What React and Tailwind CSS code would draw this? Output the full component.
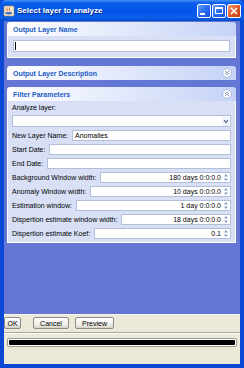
import React from "react";

const font = { fontFamily: '"Liberation Sans", Arial, sans-serif' };

function CollapseIcon({ up }) {
  return (
    <svg width="10" height="10" viewBox="0 0 10 10" className="block">
      <circle cx="5" cy="5" r="4.3" fill="#ffffff" stroke="#a6b4d8" strokeWidth="0.8" />
      {up ? (
        <g fill="none" stroke="#7d8fb8" strokeWidth="0.9">
          <path d="M3 5 L5 3.2 L7 5" />
          <path d="M3 7 L5 5.2 L7 7" />
        </g>
      ) : (
        <g fill="none" stroke="#7d8fb8" strokeWidth="0.9">
          <path d="M3 3 L5 4.8 L7 3" />
          <path d="M3 5 L5 6.8 L7 5" />
        </g>
      )}
    </svg>
  );
}

function PanelHeader({ title, icon }) {
  return (
    <div className="h-[14px] flex items-center justify-between pl-[6px] pr-[4px] rounded-t-[3px] bg-[linear-gradient(to_right,#ffffff,#c6d3f7)]">
      <span className="text-[7px] font-bold text-[#215dc6] leading-none">{title}</span>
      {icon}
    </div>
  );
}

function Spinner() {
  return (
    <svg width="6" height="9" viewBox="0 0 6 9" className="block">
      <path d="M1 3.5 L3 1 L5 3.5 Z" fill="#8a9bc4" />
      <path d="M1 5.5 L3 8 L5 5.5 Z" fill="#8a9bc4" />
    </svg>
  );
}

function TextRow({ label, value }) {
  return (
    <div className="h-[11px] flex items-center">
      <span className="text-[7px] leading-none text-black whitespace-nowrap">{label}</span>
      <div className="flex-1 ml-[4px] h-full bg-white border border-[#b3bfd9] flex items-center pl-[2px]">
        <span className="text-[7px] leading-none text-black">{value}</span>
      </div>
    </div>
  );
}

function SpinRow({ label, value }) {
  return (
    <div className="h-[11px] flex items-center">
      <span className="text-[7px] leading-none text-black whitespace-nowrap">{label}</span>
      <div className="flex-1 ml-[4px] h-full bg-white border border-[#b3bfd9] flex items-center justify-end pr-[1px]">
        <span className="text-[7px] leading-none text-black mr-[2px]">{value}</span>
        <Spinner />
      </div>
    </div>
  );
}

function WinButton({ children, red }) {
  return (
    <div
      className={
        "w-[14px] h-[14px] rounded-[2px] border border-white flex items-center justify-center " +
        (red
          ? "bg-[linear-gradient(135deg,#f0a080,#e05a2a_50%,#c53c10)]"
          : "bg-[linear-gradient(135deg,#6aa0ff,#2a6cf0_50%,#1650d8)]")
      }
    >
      {children}
    </div>
  );
}

function TitleBar() {
  return (
    <div className="h-[21px] flex items-center pl-[3px] pr-[3px] rounded-t-[6px] bg-[linear-gradient(to_bottom,#4493f8_0%,#0a5ceb_14%,#0255e8_55%,#0c60ea_85%,#0048ca_100%)]">
      <svg width="12" height="12" viewBox="0 0 12 12" className="block shrink-0">
        <rect x="1" y="1" width="10" height="10" rx="1" fill="#f3e9d2" stroke="#b08a4a" strokeWidth="0.6" />
        <path d="M4 2.5 C3 4 5 4.5 4 6" stroke="#e2581c" strokeWidth="1" fill="none" />
        <path d="M6.5 2.5 C5.5 4 7.5 4.5 6.5 6" stroke="#e2581c" strokeWidth="1" fill="none" />
        <path d="M2.5 7 H9 V8.5 C9 9.8 3 9.8 2.5 8.5 Z" fill="#4a72b8" />
      </svg>
      <span className="ml-[2px] text-[8px] font-bold text-white leading-none whitespace-nowrap [text-shadow:1px_1px_0_#0a2a8a]">
        Select layer to analyze
      </span>
      <div className="flex-1" />
      <div className="flex gap-[1px]">
        <WinButton>
          <div className="w-[5px] h-[2px] bg-white mt-[6px] -ml-[3px]" />
        </WinButton>
        <WinButton>
          <div className="w-[8px] h-[7px] border border-white border-t-2" />
        </WinButton>
        <WinButton red>
          <svg width="8" height="8" viewBox="0 0 8 8" className="block">
            <path d="M1 1 L7 7 M7 1 L1 7" stroke="#ffffff" strokeWidth="1.6" />
          </svg>
        </WinButton>
      </div>
    </div>
  );
}

function Btn({ children, w, ml }) {
  return (
    <div
      className={
        "h-[12px] rounded-[2px] border border-[#8c8c8c] bg-[linear-gradient(to_bottom,#ffffff,#ecebe6_70%,#d6d0c5)] flex items-center justify-center " +
        w +
        " " +
        ml
      }
    >
      <span className="text-[7px] leading-none text-black">{children}</span>
    </div>
  );
}

export default function App() {
  return (
    <div style={font} className="w-[244px] h-[368px] bg-[#0b48d6] flex flex-col overflow-hidden">
      <TitleBar />
      <div className="flex-1 flex flex-col mx-[4px] mb-[4px]">
        <div className="flex-1 bg-[#6577d4] pt-[1px] pl-[3px] pr-[4px] flex flex-col">
          {/* Output Layer Name */}
          <div>
            <PanelHeader title="Output Layer Name" />
            <div className="bg-[#d9e0f6] border border-t-0 border-white px-[5px] pt-[4px] pb-[5px]">
              <div className="h-[12px] bg-white border border-[#b3bfd9] flex items-center pl-[1px]">
                <div className="w-[1px] h-[8px] bg-black" />
              </div>
            </div>
          </div>

          {/* Output Layer Description */}
          <div className="mt-[8px]">
            <PanelHeader title="Output Layer Description" icon={<CollapseIcon />} />
          </div>

          {/* Filter Parameters */}
          <div className="mt-[7px]">
            <PanelHeader title="Filter Parameters" icon={<CollapseIcon up />} />
            <div className="bg-[#d9e0f6] border border-t-0 border-white px-[4px] pt-[1px] pb-[3px] flex flex-col">
              <div className="h-[10px] flex items-center">
                <span className="text-[7px] leading-none text-black">Analyze layer:</span>
              </div>
              <div className="mt-[3px] h-[12px] bg-white border border-[#b3bfd9] flex items-center justify-end pr-[1px]">
                <div className="w-[7px] h-[9px] flex items-center justify-center bg-[#eef2fc]">
                  <svg width="6" height="5" viewBox="0 0 6 5" className="block">
                    <path d="M1 1 L3 3.5 L5 1" stroke="#4d6185" strokeWidth="1.1" fill="none" />
                  </svg>
                </div>
              </div>
              <div className="mt-[3px] flex flex-col gap-[3px]">
                <TextRow label="New Layer Name:" value="Anomalies" />
                <TextRow label="Start Date:" value="" />
                <TextRow label="End Date:" value="" />
                <SpinRow label="Background Window width:" value="180 days 0:0:0.0" />
                <SpinRow label="Anomaly Window width:" value="10 days 0:0:0.0" />
                <SpinRow label="Estimation window:" value="1 day 0:0:0.0" />
                <SpinRow label="Dispertion estimate window width:" value="18 days 0:0:0.0" />
                <SpinRow label="Dispertion estimate Koef:" value="0.1" />
              </div>
            </div>
          </div>
        </div>

        {/* Bottom bar */}
        <div className="h-[50px] bg-[#ece9d8] border-t border-[#f6f4ec] flex flex-col">
          <div className="flex mt-[2px]">
            <Btn w="w-[17px]" ml="ml-0">OK</Btn>
            <Btn w="w-[36px]" ml="ml-[12px]">Cancel</Btn>
            <Btn w="w-[39px]" ml="ml-[6px]">Preview</Btn>
          </div>
          <div className="mt-[3px] h-[1px] bg-[#aca899]" />
          <div className="h-[1px] bg-white" />
          <div className="mt-[4px] mx-[3px] h-[9px] rounded-[2px] border border-[#9c9a8f] bg-white p-[1px]">
            <div className="h-full bg-black rounded-[1px]" />
          </div>
        </div>
      </div>
    </div>
  );
}
